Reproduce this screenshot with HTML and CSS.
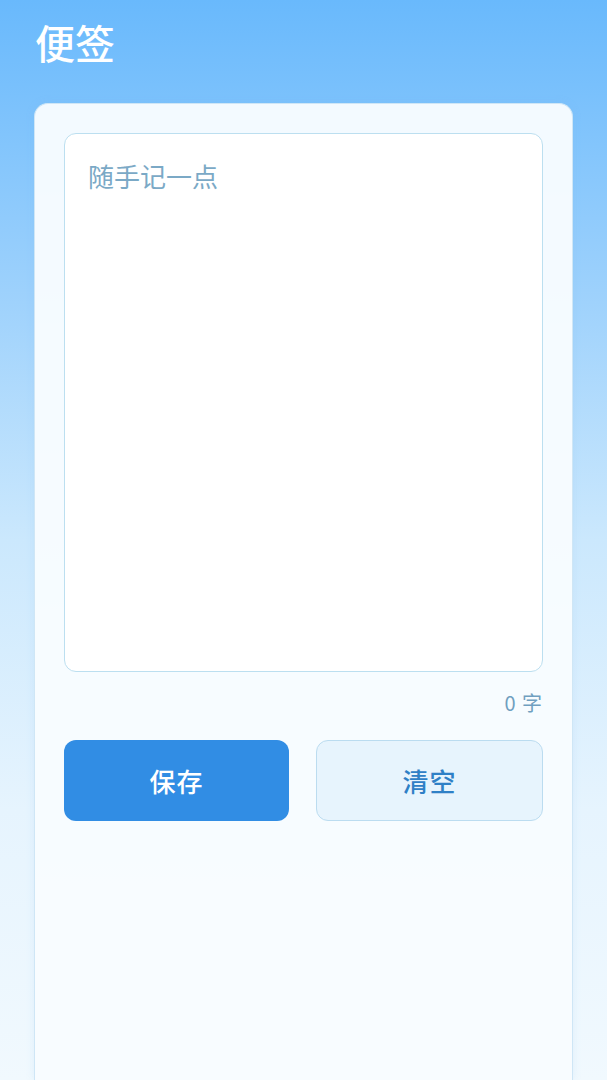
FILE: index.html
```html
<!DOCTYPE html>
<html lang="zh">
<head>
<meta charset="utf-8">
<title>便签</title>
<link rel="stylesheet" href="styles.css">
</head>
<body>
<div class="page">
  <h1 class="title">便签</h1>
  <div class="card">
    <div class="editor"><span class="placeholder">随手记一点</span></div>
    <div class="counter">0 字</div>
    <div class="actions">
      <button class="btn btn-save">保存</button>
      <button class="btn btn-clear">清空</button>
    </div>
  </div>
</div>
</body>
</html>
```
FILE: styles.css
```css
html, body {
  margin: 0;
  padding: 0;
  height: 100%;
}
body {
  background: linear-gradient(180deg, #69b9fc 0%, #9fd2fc 28%, #cbe8fd 50%, #e6f4fe 75%, #f1f9fe 100%);
  font-family: "Noto Sans CJK SC", "Noto Sans", sans-serif;
  overflow: hidden;
}
.page {
  padding: 0 34px;
  height: 1080px;
  display: flex;
  flex-direction: column;
}
.title {
  margin: 0;
  padding: 14px 0 0 1px;
  height: 103px;
  box-sizing: border-box;
  font-size: 40px;
  line-height: 56px;
  font-weight: 500;
  color: #ffffff;
}
.card {
  flex: 1;
  background: rgba(248, 252, 255, 0.96);
  border: 1px solid #cfe6f6;
  border-bottom: none;
  border-radius: 14px 14px 0 0;
  padding: 29px 29px 0;
  display: flex;
  flex-direction: column;
  box-shadow: 0 0 8px rgba(120, 180, 230, 0.15);
}
.editor {
  height: 539px;
  box-sizing: border-box;
  background: #ffffff;
  border: 1.5px solid #bcdff0;
  border-radius: 12px;
  padding: 24px 23px;
}
.placeholder {
  font-size: 26px;
  line-height: 36px;
  color: #7ba9c6;
}
.counter {
  text-align: right;
  font-size: 20px;
  line-height: 26px;
  color: #6f9fc0;
  margin-top: 18px;
  letter-spacing: 1px;
}
.actions {
  display: flex;
  gap: 27px;
  margin-top: 24px;
}
.btn {
  flex: 1;
  height: 81px;
  border-radius: 12px;
  font-family: "Noto Sans CJK SC", "Noto Sans", sans-serif;
  font-size: 26px;
  font-weight: 500;
  letter-spacing: 1px;
  cursor: pointer;
}
.btn-save {
  background: #318de4;
  color: #ffffff;
  border: none;
}
.btn-clear {
  background: #e7f4fd;
  color: #2f80c6;
  border: 1.5px solid #bbdcf0;
}
```
